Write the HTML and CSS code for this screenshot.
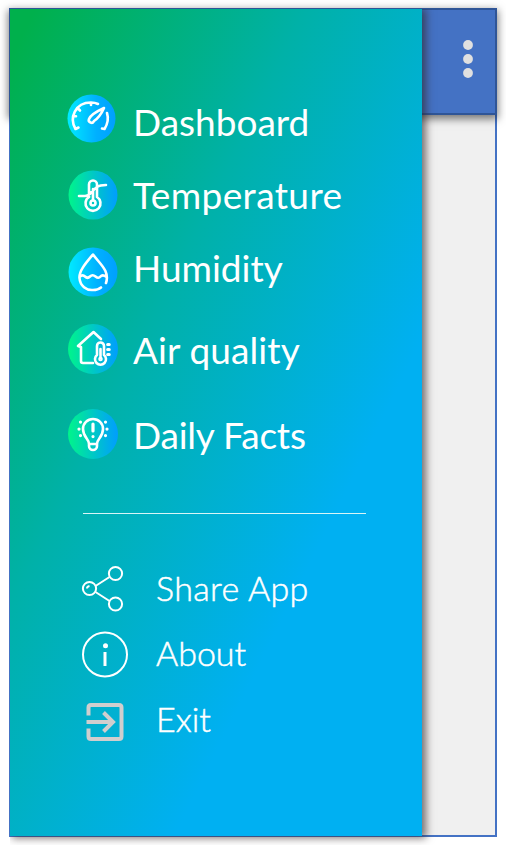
FILE: index.html
```html
<!DOCTYPE html>
<html lang="en">
<head>
<meta charset="utf-8">
<title>Navigation drawer</title>
<link rel="stylesheet" href="styles.css">
</head>
<body>
<svg class="defs" width="0" height="0" aria-hidden="true">
  <defs>
    <linearGradient id="cyan"><stop offset="0" stop-color="#00ebff"/><stop offset=".6" stop-color="#00b0ff"/><stop offset="1" stop-color="#009fff"/></linearGradient>
    <linearGradient id="mint"><stop offset="0" stop-color="#00f58a"/><stop offset="1" stop-color="#009dff"/></linearGradient>
  </defs>
</svg>
<div class="app">
  <header class="bar">
    <svg class="more" width="12" height="40" viewBox="0 0 12 40"><circle cx="6" cy="6" r="4.9"/><circle cx="6" cy="20" r="4.9"/><circle cx="6" cy="34" r="4.9"/></svg>
  </header>
  <nav class="drawer">
    <a class="item dash">
      <svg class="badge" width="52" height="52" viewBox="0 0 52 52"><circle class="disc" cx="24.500" cy="26.500" r="24" fill="url(#cyan)"/><path d="M11.500 35.500 8.500 37C2 26 8 10.500 24 10.500q4 0 7 1.500M24 11v2M11.500 17l1.500 1.500M7 24l2 .3M35 36.500l2.500 .5q5-8 2.500-16M37 16Q24 22 22 27a2.500 2.500 0 0 0 5 2Q33 25 37 16Z"/></svg>
      <span class="label">Dashboard</span>
    </a>
    <a class="item temp">
      <svg class="badge" width="52" height="52" viewBox="0 0 52 52"><circle class="disc" cx="26" cy="26" r="24.500" fill="url(#mint)"/><path d="M12 27h6c6 0 6-5 12-9q3-2 9-2M22 28V15.500a4 4 0 0 1 8 0V28a7.500 7.500 0 1 1-8 0ZM26 20v11"/><circle cx="26" cy="34" r="2.500"/></svg>
      <span class="label">Temperature</span>
    </a>
    <a class="item humid">
      <svg class="badge" width="52" height="52" viewBox="0 0 52 52"><circle class="disc" cx="26" cy="26" r="24.500" fill="url(#cyan)"/><path d="M39 37C43 25 33 18 26 8.500 18 18 12 25 12.500 32c.5 8 7 12.500 13.500 12q5 0 8-2.500M12.500 31q3-3 5.500-.5t5 0 5.500 0 5 0 6 .5"/></svg>
      <span class="label">Humidity</span>
    </a>
    <a class="item air">
      <svg class="badge" width="52" height="52" viewBox="0 0 52 52"><circle class="disc" cx="26" cy="26" r="25" fill="url(#mint)"/><path d="M26 40H16q-2 0-2-2V24l-3-1L26.500 9 34 16M30 32V23a3.500 3.500 0 0 1 7 0v9a5.500 5.500 0 1 1-7 0ZM33.500 26v9"/><path class="dots" d="M40.700 21.500h1.500M40.700 26.500h1.500M40.700 31.500h1.500"/><circle cx="33.500" cy="36" r="1"/></svg>
      <span class="label">Air quality</span>
    </a>
    <a class="item facts">
      <svg class="badge" width="52" height="52" viewBox="0 0 52 52"><circle class="disc" cx="26" cy="26" r="25" fill="url(#mint)"/><path d="M22 36c0-5-6-7-6-15a10 10 0 0 1 20 0c0 8-6 10-6 15v2a4 4 0 0 1-8 0ZM22 36h8"/><path class="dots" d="M26 16v7M26 28.500v.1M13.500 14v.1M12 21v.1M13.500 27.500v.1M38.500 14v.1M40 21v.1M38.500 27.500v.1"/></svg>
      <span class="label">Daily Facts</span>
    </a>
    <hr class="rule">
    <a class="item small share">
      <svg class="glyph" width="48" height="48" viewBox="0 0 48 48"><path d="m14.500 21 14-9m-14 15 14 9"/><circle cx="8.500" cy="23.500" r="6.600"/><circle cx="34.500" cy="8.500" r="6.600"/><circle cx="34.500" cy="39" r="6.600"/><path d="M6 23.500q0-2 2.500-2.500"/></svg>
      <span class="label">Share App</span>
    </a>
    <a class="item small about">
      <svg class="glyph" width="48" height="48" viewBox="0 0 48 48"><circle cx="24" cy="23.500" r="22"/><path class="stem" d="M24 21v14"/><circle class="dot" cx="24.500" cy="14.700" r="2.500"/></svg>
      <span class="label">About</span>
    </a>
    <a class="item small exit">
      <svg class="glyph door" width="48" height="48" viewBox="0 0 48 48"><path d="M7.500 18.500V10.500q0-2.500 2.500-2.500h28q2.500 0 2.500 2.500v29q0 2.500-2.500 2.500H10q-2.500 0-2.500-2.500v-8M5.500 25h25M22.500 15.500l9.500 9.500L22.500 34.500"/></svg>
      <span class="label">Exit</span>
    </a>
  </nav>
</div>
</body>
</html>
```

FILE: styles.css
```css
* { box-sizing: border-box; }
body { margin: 0; height: 845px; padding: 8px 9px; background: #fff; overflow: hidden; font-family: Lato, "Liberation Sans", sans-serif; }
.defs { position: absolute; }
.app { position: relative; width: 488px; height: 829px; border: 2px solid #4472c4; background: #f0f0f0; }
.bar { height: 107px; margin: -2px -2px 0; padding: 28.5px 21px 0 0; display: flex; justify-content: flex-end; background: #4472c4; border: 2px solid #2f5597; box-shadow: 0 3px 8px 1px rgba(0,0,0,.5); }
.more { fill: #e0e0e0; }
.drawer { position: absolute; left: -1px; top: -1px; width: 412px; height: 827px; padding: 83px 0 0 57px; background: linear-gradient(to bottom right, #00b04c 3%, #00b1a8 36%, #00b0f2 70%); box-shadow: 3px 1px 8px 1px rgba(50,40,40,.65); clip-path: inset(0 -20px -14px 0); }
.item { display: flex; align-items: center; height: 52px; color: #fff; }
.badge { flex: none; fill: none; stroke: #fff; stroke-width: 2.6; stroke-linecap: round; stroke-linejoin: round; }
.badge .disc { stroke: none; }
.badge .dots { stroke-width: 3.2; }
.label { font-size: 37px; line-height: 52px; white-space: nowrap; margin-left: 14px; }
.dash .label { padding-top: 8px; }
.temp { margin-top: 25px; }
.temp .label { letter-spacing: .4px; }
.humid { margin-top: 25px; }
.humid .label { padding-bottom: 8px; }
.air { margin-top: 25px; }
.air .label { padding-top: 2px; letter-spacing: .1px; }
.facts { margin-top: 33px; }
.facts .label { padding-top: 2px; letter-spacing: -.2px; }
.rule { width: 283px; height: 1px; margin: 53px 0 49px 16px; border: 0; background: #d9f5f7; }
.glyph { flex: none; margin-left: 14px; fill: none; stroke: #fff; stroke-width: 2; }
.glyph .stem { stroke-width: 3; }
.glyph .dot { fill: #fff; stroke: none; }
.glyph.door { stroke: #d0cece; stroke-width: 4; }
.small .label { font-size: 34px; font-weight: 300; margin-left: 27px; -webkit-text-stroke: .5px #fff; }
.share .label { letter-spacing: .35px; padding-bottom: 2px; }
.about .label, .exit .label { padding-bottom: 4px; }
.about, .exit { margin-top: 14px; }
```
